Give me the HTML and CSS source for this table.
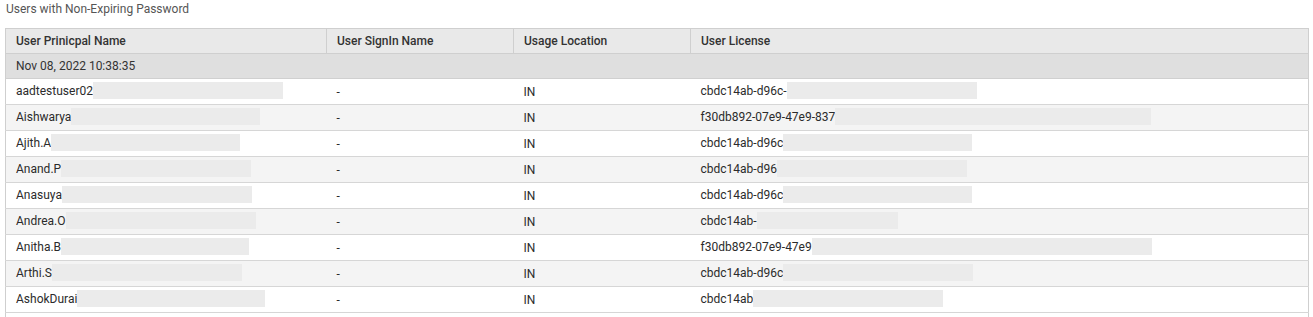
FILE: index.html
```html
<!DOCTYPE html>
<html>
<head>
<meta charset="utf-8">
<link rel="stylesheet" href="styles.css">
</head>
<body>
<div class="title">Users with Non-Expiring Password</div>
<table class="grid">
  <colgroup>
    <col class="c1"><col class="c2"><col class="c3"><col class="c4">
  </colgroup>
  <thead>
    <tr><th>User Prinicpal Name</th><th>User SignIn Name</th><th>Usage Location</th><th>User License</th></tr>
  </thead>
  <tbody>
    <tr class="group"><td colspan="4">Nov 08, 2022 10:38:35</td></tr>
    <tr><td>aadtestuser02<span class="mask" style="width:190px"></span></td><td>-</td><td>IN</td><td>cbdc14ab-d96c-<span class="mask" style="width:190px"></span></td></tr>
    <tr class="alt"><td>Aishwarya<span class="mask" style="width:189px"></span></td><td>-</td><td>IN</td><td>f30db892-07e9-47e9-837<span class="mask" style="width:316px"></span></td></tr>
    <tr><td>Ajith.A<span class="mask" style="width:189px"></span></td><td>-</td><td>IN</td><td>cbdc14ab-d96c<span class="mask" style="width:189px"></span></td></tr>
    <tr class="alt"><td>Anand.P<span class="mask" style="width:190px"></span></td><td>-</td><td>IN</td><td>cbdc14ab-d96<span class="mask" style="width:190px"></span></td></tr>
    <tr><td>Anasuya<span class="mask" style="width:190px"></span></td><td>-</td><td>IN</td><td>cbdc14ab-d96c<span class="mask" style="width:189px"></span></td></tr>
    <tr class="alt"><td>Andrea.O<span class="mask" style="width:190px"></span></td><td>-</td><td>IN</td><td>cbdc14ab-<span class="mask" style="width:141px"></span></td></tr>
    <tr><td>Anitha.B<span class="mask" style="width:188px"></span></td><td>-</td><td>IN</td><td>f30db892-07e9-47e9<span class="mask" style="width:340px"></span></td></tr>
    <tr class="alt"><td>Arthi.S<span class="mask" style="width:190px"></span></td><td>-</td><td>IN</td><td>cbdc14ab-d96c<span class="mask" style="width:190px"></span></td></tr>
    <tr><td>AshokDurai<span class="mask" style="width:188px"></span></td><td>-</td><td>IN</td><td>cbdc14ab<span class="mask" style="width:190px"></span></td></tr>
    <tr class="tail"><td></td><td></td><td></td><td></td></tr>
  </tbody>
</table>
</body>
</html>
```
FILE: styles.css
```css
html, body {
  margin: 0;
  padding: 0;
  background: #ffffff;
}
body {
  font-family: Roboto, "Liberation Sans", Arial, sans-serif;
  font-size: 12px;
  color: #333333;
  overflow: hidden;
}
.title {
  padding: 2px 0 0 6px;
  height: 26px;
  line-height: 14px;
  color: #555555;
  font-size: 12px;
}
.grid {
  margin-left: 5px;
  width: 1304px;
  border-collapse: collapse;
  table-layout: fixed;
  border: 1px solid #cfcfcf;
}
.c1 { width: 321px; }
.c2 { width: 187px; }
.c3 { width: 177px; }
.c4 { width: auto; }
.grid th {
  background: #e9e9e9;
  font-weight: 500;
  text-align: left;
  color: #333333;
  height: 24px;
  padding: 0 0 0 10px;
  border: 1px solid #cfcfcf;
  white-space: nowrap;
}
.grid td {
  height: 25px;
  padding: 0 0 0 10px;
  border-bottom: 1px solid #d6d6d6;
  white-space: nowrap;
  overflow: hidden;
  vertical-align: middle;
  color: #2b2b2b;
}
.grid tr.group td {
  background: #dfdfdf;
  border-bottom: 1px solid #d0d0d0;
  color: #333333;
  height: 24px;
}
.grid tr.alt td {
  background: #f4f4f4;
}
.mask {
  display: inline-block;
  height: 17px;
  background: #ebebeb;
  vertical-align: middle;
  margin-top: -2px;
}
```
